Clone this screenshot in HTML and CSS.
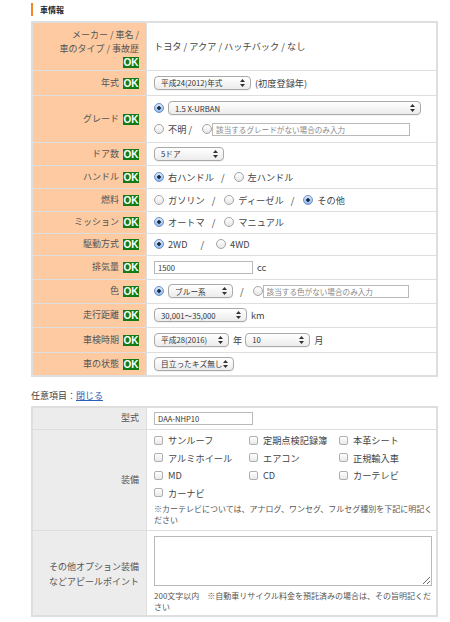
FILE: index.html
```html
<!DOCTYPE html>
<html lang="ja">
<head>
<meta charset="utf-8">
<title>車情報</title>
<link rel="stylesheet" href="styles.css">
</head>
<body>
<div class="page">
  <h2 class="sec-title">車情報</h2>
  <table class="form main">
    <tr class="r48">
      <th class="multi">メーカー / 車名 /<br>車のタイプ / 事故歴<br><span class="ok">OK</span></th>
      <td>トヨタ / アクア / ハッチバック / なし</td>
    </tr>
    <tr class="r25">
      <th>年式<span class="ok">OK</span></th>
      <td><div class="line"><span class="sel w97"><span>平成24(2012)年式</span><svg class="arr" width="5" height="8" viewBox="0 0 5 8"><path d="M2.5 0L5 3H0zM2.5 8L0 5h5z" fill="#333"/></svg></span><span class="after">(初度登録年)</span></div></td>
    </tr>
    <tr class="r47">
      <th>グレード<span class="ok">OK</span></th>
      <td>
        <div class="line"><span class="rd on"></span><span class="sel w253 ml4"><span>1.5 X-URBAN</span><svg class="arr" width="5" height="8" viewBox="0 0 5 8"><path d="M2.5 0L5 3H0zM2.5 8L0 5h5z" fill="#333"/></svg></span></div>
        <div class="line mt7"><span class="rd"></span><span class="lbl">不明 /</span><span class="rd ml10"></span><input class="txt w198 ml4" type="text" placeholder="該当するグレードがない場合のみ入力"></div>
      </td>
    </tr>
    <tr class="r23">
      <th>ドア数<span class="ok">OK</span></th>
      <td><div class="line"><span class="sel w70"><span>5ドア</span><svg class="arr" width="5" height="8" viewBox="0 0 5 8"><path d="M2.5 0L5 3H0zM2.5 8L0 5h5z" fill="#333"/></svg></span></div></td>
    </tr>
    <tr class="r23">
      <th>ハンドル<span class="ok">OK</span></th>
      <td><div class="line"><span class="rd on"></span><span class="lbl">右ハンドル</span><span class="sep">/</span><span class="rd"></span><span class="lbl">左ハンドル</span></div></td>
    </tr>
    <tr class="r23">
      <th>燃料<span class="ok">OK</span></th>
      <td><div class="line"><span class="rd"></span><span class="lbl">ガソリン</span><span class="sep">/</span><span class="rd"></span><span class="lbl">ディーゼル</span><span class="sep">/</span><span class="rd on"></span><span class="lbl">その他</span></div></td>
    </tr>
    <tr class="r22">
      <th>ミッション<span class="ok">OK</span></th>
      <td><div class="line"><span class="rd on"></span><span class="lbl">オートマ</span><span class="sep">/</span><span class="rd"></span><span class="lbl">マニュアル</span></div></td>
    </tr>
    <tr class="r22">
      <th>駆動方式<span class="ok">OK</span></th>
      <td><div class="line"><span class="rd on"></span><span class="lbl">2WD</span><span class="sep wide">/</span><span class="rd"></span><span class="lbl">4WD</span></div></td>
    </tr>
    <tr class="r24">
      <th>排気量<span class="ok">OK</span></th>
      <td><div class="line"><input class="txt w99" type="text" value="1500"><span class="after">cc</span></div></td>
    </tr>
    <tr class="r24">
      <th>色<span class="ok">OK</span></th>
      <td><div class="line"><span class="rd on"></span><span class="sel w65 ml4"><span>ブルー系</span><svg class="arr" width="5" height="8" viewBox="0 0 5 8"><path d="M2.5 0L5 3H0zM2.5 8L0 5h5z" fill="#333"/></svg></span><span class="sep">/</span><span class="rd"></span><input class="txt w146 ml4" type="text" placeholder="該当する色がない場合のみ入力"></div></td>
    </tr>
    <tr class="r24">
      <th>走行距離<span class="ok">OK</span></th>
      <td><div class="line"><span class="sel w93"><span>30,001〜35,000</span><svg class="arr" width="5" height="8" viewBox="0 0 5 8"><path d="M2.5 0L5 3H0zM2.5 8L0 5h5z" fill="#333"/></svg></span><span class="after">km</span></div></td>
    </tr>
    <tr class="r25">
      <th>車検時期<span class="ok">OK</span></th>
      <td><div class="line"><span class="sel w75"><span>平成28(2016)</span><svg class="arr" width="5" height="8" viewBox="0 0 5 8"><path d="M2.5 0L5 3H0zM2.5 8L0 5h5z" fill="#333"/></svg></span><span class="after">年</span><span class="sel w65 ml3"><span>10</span><svg class="arr" width="5" height="8" viewBox="0 0 5 8"><path d="M2.5 0L5 3H0zM2.5 8L0 5h5z" fill="#333"/></svg></span><span class="after">月</span></div></td>
    </tr>
    <tr class="r24">
      <th>車の状態<span class="ok">OK</span></th>
      <td><div class="line"><span class="sel w80"><span>目立ったキズ無し</span><svg class="arr" width="5" height="8" viewBox="0 0 5 8"><path d="M2.5 0L5 3H0zM2.5 8L0 5h5z" fill="#333"/></svg></span></div></td>
    </tr>
  </table>

  <p class="opt">任意項目：<a href="#" class="link">閉じる</a></p>

  <table class="form sub">
    <tr class="r22">
      <th>型式</th>
      <td><div class="line"><input class="txt w99" type="text" value="DAA-NHP10"></div></td>
    </tr>
    <tr class="r102">
      <th>装備</th>
      <td>
        <div class="checks">
          <label class="ck"><span class="cb"></span>サンルーフ</label>
          <label class="ck"><span class="cb"></span>定期点検記録簿</label>
          <label class="ck"><span class="cb"></span>本革シート</label>
          <label class="ck"><span class="cb"></span>アルミホイール</label>
          <label class="ck"><span class="cb"></span>エアコン</label>
          <label class="ck"><span class="cb"></span>正規輸入車</label>
          <label class="ck"><span class="cb"></span>MD</label>
          <label class="ck"><span class="cb"></span>CD</label>
          <label class="ck"><span class="cb"></span>カーテレビ</label>
          <label class="ck"><span class="cb"></span>カーナビ</label>
        </div>
        <p class="note">※カーテレビについては、アナログ、ワンセグ、フルセグ種別を下記に明記く<br>ださい</p>
      </td>
    </tr>
    <tr class="r86">
      <th class="two">その他オプション装備<br>などアピールポイント</th>
      <td>
        <textarea class="area"></textarea>
        <p class="note">200文字以内　※自動車リサイクル料金を預託済みの場合は、その旨明記くだ<br>さい</p>
      </td>
    </tr>
  </table>
</div>
</body>
</html>
```

FILE: styles.css
```css
html, body {
  margin: 0;
  padding: 0;
  background: #fff;
}
body {
  font-family: "Noto Sans CJK JP", "Noto Sans", sans-serif;
  color: #444;
}
.page {
  padding-left: 31px;
  width: 407px;
}
.sec-title {
  margin: 3px 0 5px;
  height: 13px;
  border-left: 2px solid #f0872b;
  padding-left: 7px;
  font-size: 8px;
  line-height: 13px;
  font-weight: bold;
  color: #222;
}
.form {
  width: 407px;
  border-collapse: collapse;
  border: 2px solid #dedede;
}
.form th,
.form td {
  border: 1px solid #dedede;
  padding: 0;
  vertical-align: middle;
}
.form th {
  width: 106px;
  padding-right: 7px;
  text-align: right;
  font-weight: normal;
  font-size: 9px;
  line-height: 14px;
  color: #555;
}
.form th.multi { line-height: 13.5px; padding-top: 5px; padding-bottom: 1px; }
.form th.two { line-height: 15px; padding-top: 2px; }
.main th { background: #fdcaa2; }
.sub th { background: #ececec; }
.form td {
  padding-left: 7px;
  font-size: 9.2px;
  color: #444;
}
.r22 { height: 22px; }
.r23 { height: 23px; }
.r24 { height: 24px; }
.r25 { height: 25px; }
.r47 { height: 47px; }
.r48 { height: 48px; }
.r86 { height: 86px; }
.r102 { height: 101px; }

.ok {
  display: inline-block;
  margin-left: 4px;
  width: 16px;
  height: 11px;
  background: #147a14;
  color: #fff;
  font-family: "Liberation Sans", Arial, sans-serif;
  font-weight: bold;
  font-size: 10px;
  line-height: 11px;
  text-align: center;
  vertical-align: -1px;
}
.line {
  display: flex;
  align-items: center;
}
.mt7 { margin-top: 7px; }
.ml3 { margin-left: 3px; }
.ml4 { margin-left: 4px; }
.ml10 { margin-left: 10px; }

.sel {
  display: inline-flex;
  align-items: center;
  justify-content: space-between;
  box-sizing: border-box;
  height: 14px;
  padding: 0 5px 0 6px;
  border: 1px solid #a9a9a9;
  border-radius: 4px;
  background: linear-gradient(#ffffff, #ececec);
  box-shadow: 0 1px 0 rgba(0,0,0,0.05);
  font-size: 7.7px;
  color: #333;
  white-space: nowrap;
}
.arr { flex: none; }
.w65 { width: 65px; }
.w70 { width: 70px; }
.w75 { width: 75px; }
.w80 { width: 80px; }
.w93 { width: 93px; }
.w97 { width: 97px; }
.w99 { width: 99px; }
.w146 { width: 146px; }
.w198 { width: 198px; }
.w253 { width: 253px; }

.after {
  margin-left: 4px;
  font-size: 9.2px;
}
.txt {
  box-sizing: border-box;
  height: 13px;
  margin: 0;
  padding: 0 3px;
  border: 1px solid #b9b9b9;
  border-radius: 0;
  background: #fff;
  font-family: "Noto Sans CJK JP", "Noto Sans", sans-serif;
  font-size: 7.6px;
  color: #333;
  outline: none;
}
.txt::placeholder { color: #888; }

.rd {
  flex: none;
  box-sizing: border-box;
  display: inline-block;
  width: 10px;
  height: 10px;
  border-radius: 50%;
  border: 1px solid #a5a5a5;
  background: linear-gradient(#ffffff, #e6e6e6);
}
.rd.on {
  border-color: #6f92c6;
  background: radial-gradient(circle, #1d2a3f 0 1.5px, transparent 2px), linear-gradient(#d8e7fb, #8db6ec);
}
.lbl { margin-left: 4px; }
.sep { margin: 0 9px 0 7px; }
.sep.wide { margin: 0 12px 0 13px; }

.opt {
  margin: 12px 0 4px;
  font-size: 9px;
  line-height: 13px;
  color: #444;
}
.link { color: #2a62b8; text-decoration: underline; }

.checks {
  display: grid;
  grid-template-columns: 95px 90px auto;
  row-gap: 5px;
  padding-top: 3px;
}
.ck {
  display: flex;
  align-items: center;
  line-height: 12.5px;
  font-size: 9.2px;
  white-space: nowrap;
}
.cb {
  flex: none;
  box-sizing: border-box;
  width: 9px;
  height: 9px;
  margin-right: 5px;
  border: 1px solid #b0b0b0;
  border-radius: 2px;
  background: linear-gradient(#ffffff, #e8e8e8);
}
.note {
  margin: 5px 0 3px;
  font-size: 7.7px;
  line-height: 11px;
  color: #555;
  white-space: nowrap;
}
.area {
  display: block;
  box-sizing: border-box;
  width: 278px;
  height: 50px;
  margin: 5px 0 0;
  border: 1px solid #b9b9b9;
  background: #fff;
  resize: both;
}
.sub .note { margin-top: 4px; font-size: 8px; }
```
